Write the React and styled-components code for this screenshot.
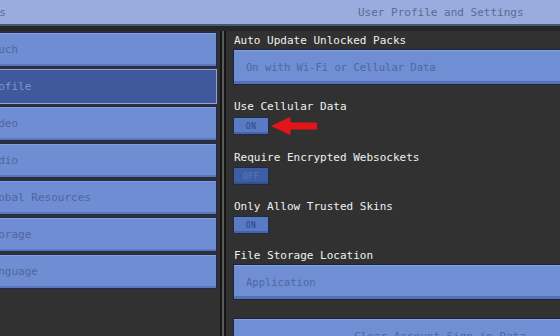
import React from 'react';
import styled, { createGlobalStyle } from 'styled-components';

const GlobalStyle = createGlobalStyle`
  html, body {
    margin: 0;
    padding: 0;
    background: #313131;
  }
  body {
    font-family: "DejaVu Sans Mono", "Liberation Mono", monospace;
  }
`;

const Page = styled.div`
  width: 560px;
  height: 336px;
  overflow: hidden;
  background: #313131;
  display: flex;
  flex-direction: column;
`;

const Header = styled.header`
  height: 24px;
  flex: none;
  background: #9aabdd;
  border-bottom: 2px solid #4b5673;
  display: flex;
  align-items: center;
  font-size: 11px;
  color: #5a6a93;
`;

const HeaderSide = styled.span`
  width: 217px;
  margin-left: -47px;
  flex: none;
  white-space: nowrap;
`;

const HeaderTitle = styled.span`
  margin-left: 188px;
  white-space: nowrap;
`;

const Body = styled.div`
  flex: 1;
  display: flex;
  border-top: 5px solid #262626;
  min-height: 0;
`;

const Sidebar = styled.nav`
  width: 277px;
  margin-left: -60px;
  flex: none;
  display: flex;
  flex-direction: column;
  gap: 2px;
  padding-top: 1px;
`;

const NavButton = styled.div`
  height: 35px;
  box-sizing: border-box;
  display: flex;
  align-items: center;
  padding-left: 44px;
  font-size: 11px;
  background: ${(p) => (p.$active ? '#3f599c' : '#6e8dd2')};
  color: ${(p) => (p.$active ? '#8095c9' : '#52669b')};
  border: 1px solid ${(p) => (p.$active ? '#8ea4dc' : '#1f2b4a')};
  box-shadow: ${(p) => (p.$active ? 'none' : 'inset 0 1px 0 #86a0de, inset 0 -2px 0 #5a77bb')};
  white-space: nowrap;
`;

const Divider = styled.div`
  width: 2px;
  margin-left: 3px;
  flex: none;
  background: #5b5b5b;
  border-left: 2px solid #151515;
  border-right: 2px solid #151515;
`;

const Content = styled.section`
  flex: 1;
  margin-right: -87px;
  padding: 2px 0 0 7px;
  display: flex;
  flex-direction: column;
  gap: 14px;
`;

const Group = styled.div`
  display: flex;
  flex-direction: column;
`;

const Label = styled.div`
  height: 16px;
  line-height: 16px;
  font-size: 11px;
  color: #f0f0f0;
  white-space: nowrap;
  padding-left: 1px;
`;

const Dropdown = styled.div`
  height: 36px;
  box-sizing: border-box;
  display: flex;
  align-items: center;
  padding-left: 12px;
  font-size: 10.5px;
  color: #5067a0;
  background: #6f8ed3;
  border: 1px solid #1a2440;
  box-shadow: inset 0 -3px 0 #5570b4, inset 0 1px 0 #86a1e0;
  white-space: nowrap;
`;

const ToggleRow = styled.div`
  display: flex;
  align-items: center;
  gap: 2px;
  margin-top: 1px;
`;

const Toggle = styled.div`
  width: 36px;
  height: 18px;
  box-sizing: border-box;
  display: flex;
  align-items: center;
  justify-content: center;
  font-size: 8px;
  letter-spacing: 0.5px;
  background: ${(p) => (p.$on ? '#5a7ac3' : '#3e5ea4')};
  color: ${(p) => (p.$on ? '#2c4684' : '#5c79bd')};
  border: 1px solid #1d2a4a;
  box-shadow: inset 0 -2px 0 ${(p) => (p.$on ? '#4764a8' : '#34518f')};
`;

const WideButton = styled.div`
  margin-top: 4px;
  height: 36px;
  box-sizing: border-box;
  display: flex;
  justify-content: center;
  padding-top: 11px;
  font-size: 11px;
  color: #5067a0;
  background: #6f8ed3;
  border: 1px solid #1a2440;
  box-shadow: inset 0 1px 0 #86a1e0;
  white-space: nowrap;
`;

const Arrow = () => (
  <svg width="47" height="20" viewBox="0 0 47 20">
    <polygon points="0,10 19,1 20,6.5 46,6.5 46,13.5 20,13.5 19,19" fill="#e3151b" />
  </svg>
);

const nav = ['Touch', 'Profile', 'Video', 'Audio', 'Global Resources', 'Storage', 'Language'];

export default function App() {
  return (
    <>
      <GlobalStyle />
      <Page>
        <Header>
          <HeaderSide>Settings</HeaderSide>
          <HeaderTitle>User Profile and Settings</HeaderTitle>
        </Header>
        <Body>
          <Sidebar>
            {nav.map((n) => (
              <NavButton key={n} $active={n === 'Profile'}>{n}</NavButton>
            ))}
          </Sidebar>
          <Divider />
          <Content>
            <Group>
              <Label>Auto Update Unlocked Packs</Label>
              <Dropdown>On with Wi-Fi or Cellular Data</Dropdown>
            </Group>
            <Group>
              <Label>Use Cellular Data</Label>
              <ToggleRow>
                <Toggle $on>ON</Toggle>
                <Arrow />
              </ToggleRow>
            </Group>
            <Group>
              <Label>Require Encrypted Websockets</Label>
              <ToggleRow>
                <Toggle>OFF</Toggle>
              </ToggleRow>
            </Group>
            <Group>
              <Label>Only Allow Trusted Skins</Label>
              <ToggleRow>
                <Toggle $on>ON</Toggle>
              </ToggleRow>
            </Group>
            <Group>
              <Label>File Storage Location</Label>
              <Dropdown>Application</Dropdown>
            </Group>
            <WideButton>Clear Account Sign in Data</WideButton>
          </Content>
        </Body>
      </Page>
    </>
  );
}
